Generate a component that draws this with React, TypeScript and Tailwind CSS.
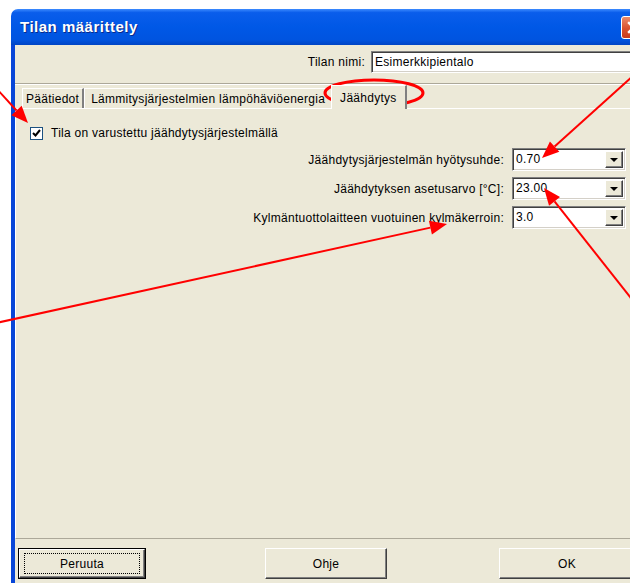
import React from "react";

const font = { fontFamily: '"Liberation Sans", Arial, sans-serif' };

// classic win32 sunken edge for edit fields and combos
const sunken =
  "border border-t-[#808080] border-l-[#808080] border-b-white border-r-white shadow-[inset_1px_1px_0_#404040,inset_-1px_-1px_0_#d4d0c8]";
// classic raised edge for push buttons
const raised =
  "border border-t-white border-l-white border-b-[#404040] border-r-[#404040] shadow-[inset_-1px_-1px_0_#808080]";

function Combo({ value }: { value: string }) {
  return (
    <div className={`flex h-[23px] w-[114px] items-stretch bg-white p-[2px] ${sunken}`}>
      <span className="flex-1 pl-[1px] text-[12px] leading-[17px] tracking-[0.27px] text-black">{value}</span>
      <span className={`flex w-[18px] items-center justify-center bg-[#ECE9D8] ${raised}`}>
        <svg width="8" height="4" viewBox="0 0 8 4">
          <path d="M0 0h8L4 4z" fill="#000" />
        </svg>
      </span>
    </div>
  );
}

function Row({ label, value }: { label: string; value: string }) {
  return (
    <div className="flex h-[23px] items-center">
      <span className="w-[488px] text-right text-[12px] tracking-[0.27px] text-black">{label}</span>
      <span className="ml-[8px]">
        <Combo value={value} />
      </span>
    </div>
  );
}

const tabBase =
  "flex items-center border-l border-t border-r-2 border-l-white border-t-white border-r-[#808080] bg-[#ECE9D8] text-[12px] tracking-[0.27px] text-black";

export default function App() {
  return (
    <div className="relative h-[583px] w-[630px] overflow-hidden bg-white" style={font}>
      <div className="ml-[11px] mt-[9px] flex h-[574px] w-[632px] flex-col">
        {/* title bar */}
        <div className="flex h-[36px] items-center justify-between rounded-tl-[7px] bg-[linear-gradient(to_bottom,#3D8BFF_0%,#0A5DEB_10%,#0058E6_50%,#0054E0_85%,#0044C4_100%)] pl-[9px]">
          <span className="text-[15px] font-bold tracking-[0.5px] text-white [text-shadow:1px_1px_0_#0a2a8a]">
            Tilan määrittely
          </span>
          <span className="mr-[-2px] flex h-[23px] w-[24px] items-center justify-center rounded-[3px] border border-white bg-[linear-gradient(to_bottom,#EB8A6A,#D9512E_55%,#C93A1C)]">
            <svg width="13" height="13" viewBox="0 0 13 13">
              <path d="M2 2l9 9M11 2l-9 9" stroke="#fff" strokeWidth="2.4" strokeLinecap="square" />
            </svg>
          </span>
        </div>

        {/* client area */}
        <div className="flex flex-1 flex-col border-l-4 border-l-[#0846D8] bg-[#ECE9D8]">
          <div className="flex h-[30px] items-center pt-[3px]">
            <span className="w-[350px] text-right text-[12px] tracking-[0.27px] text-black">Tilan nimi:</span>
            <span className={`ml-[6px] flex h-[22px] flex-1 items-center bg-white pl-[3px] text-[12px] tracking-[0.27px] text-black ${sunken}`}>
              Esimerkkipientalo
            </span>
          </div>
          <div className="mt-[8px] border-t border-b border-t-[#ACA899] border-b-white" />

          {/* tab strip */}
          <div className="flex h-[24px] items-end pl-[7px] pt-[1px]">
            <div className={`mt-[3px] h-[21px] px-[3px] ${tabBase}`}>Päätiedot</div>
            <div className={`mt-[3px] h-[21px] px-[6px] ${tabBase}`}>Lämmitysjärjestelmien lämpöhäviöenergia</div>
            <div className={`relative z-10 -ml-[2px] h-[24px] px-[8px] ${tabBase}`}>Jäähdytys</div>
          </div>

          {/* tab page */}
          <div className="-mt-px flex flex-1 flex-col border-t border-l border-b border-t-white border-l-white border-b-[#ACA899]">
            <label className="ml-[14px] mt-[15px] flex items-center gap-[8px] text-[12px] tracking-[0.27px] text-black">
              <span className="flex h-[13px] w-[13px] items-center justify-center border border-[#1C5180] bg-white">
                <svg width="9" height="8" viewBox="0 0 9 8">
                  <path d="M1 4l2.5 2.5L8 1" fill="none" stroke="#000" strokeWidth="2" />
                </svg>
              </span>
              Tila on varustettu jäähdytysjärjestelmällä
            </label>
            <div className="mt-[6px] flex flex-col gap-[6px]">
              <Row label="Jäähdytysjärjestelmän hyötysuhde:" value="0.70" />
              <Row label="Jäähdytyksen asetusarvo [°C]:" value="23.00" />
              <Row label="Kylmäntuottolaitteen vuotuinen kylmäkerroin:" value="3.0" />
            </div>
          </div>

          {/* button row */}
          <div className="flex h-[44px] items-start pt-[9px] pl-[3px]">
            <button className="flex h-[31px] w-[128px] items-center justify-center border border-black bg-[#ECE9D8] text-[12px] tracking-[0.27px] text-black">
              <span className={`flex h-full w-full items-center justify-center ${raised}`}>
                <span className="flex h-[21px] w-[116px] items-center justify-center border border-dotted border-black">
                  Peruuta
                </span>
              </span>
            </button>
            <button className={`ml-[119px] h-[31px] w-[122px] bg-[#ECE9D8] text-[12px] tracking-[0.27px] text-black ${raised}`}>
              Ohje
            </button>
            <button className={`ml-[112px] h-[31px] w-[136px] bg-[#ECE9D8] text-[12px] tracking-[0.27px] text-black ${raised}`}>
              OK
            </button>
          </div>
        </div>
      </div>

      {/* red callouts drawn over the dialog */}
      <svg className="pointer-events-none absolute inset-0" width="630" height="583" viewBox="0 0 630 583">
        <ellipse cx="374" cy="93" rx="49" ry="13" fill="none" stroke="#ff0000" strokeWidth="3" />
        <Arrow x1={-4} y1={88} x2={28} y2={123} />
        <Arrow x1={634} y1={75} x2={542} y2={158} />
        <Arrow x1={-4} y1={323} x2={447} y2={224} />
        <Arrow x1={634} y1={302} x2={544} y2={188} />
      </svg>
    </div>
  );
}

function Arrow({ x1, y1, x2, y2 }: { x1: number; y1: number; x2: number; y2: number }) {
  const a = Math.atan2(y2 - y1, x2 - x1);
  const len = 17;
  const half = 7;
  const bx = x2 - len * Math.cos(a);
  const by = y2 - len * Math.sin(a);
  const px = -Math.sin(a) * half;
  const py = Math.cos(a) * half;
  return (
    <g>
      <line x1={x1} y1={y1} x2={bx} y2={by} stroke="#ff0000" strokeWidth="2" />
      <polygon
        points={`${x2},${y2} ${bx + px},${by + py} ${bx - px},${by - py}`}
        fill="#ff0000"
      />
    </g>
  );
}
